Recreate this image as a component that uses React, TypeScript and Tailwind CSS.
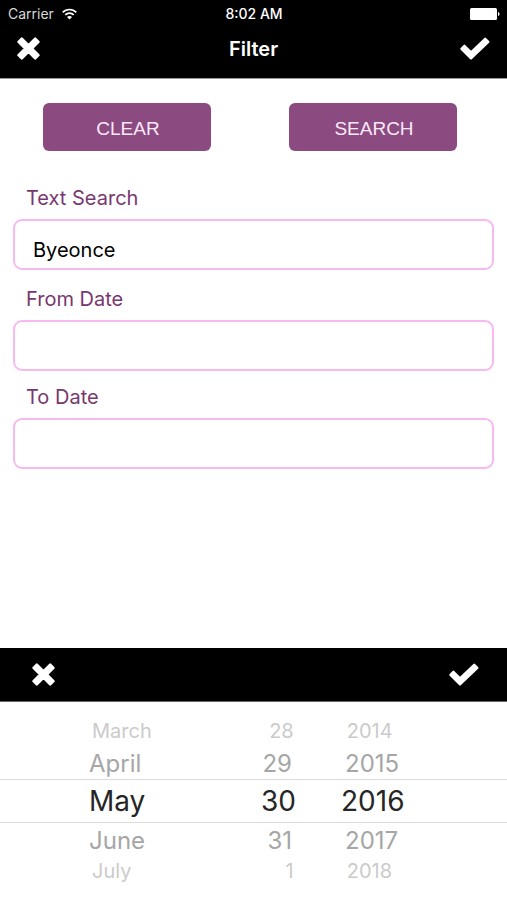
import { useState } from 'react';
import { clsx } from 'clsx';

const CloseIcon = () => (
  <svg width="23" height="23" viewBox="0 0 23 23" aria-hidden="true">
    <path
      d="M4.8 1.6 L11.5 8.3 L18.2 1.6 L21.4 4.8 L14.7 11.5 L21.4 18.2 L18.2 21.4 L11.5 14.7 L4.8 21.4 L1.6 18.2 L8.3 11.5 L1.6 4.8 Z"
      fill="white"
      stroke="white"
      strokeWidth="2.6"
      strokeLinejoin="round"
    />
  </svg>
);

const CheckIcon = () => (
  <svg width="30" height="23" viewBox="0 0 30 23" aria-hidden="true">
    <path
      d="M4.4 8.8 L11 15.4 L25.2 1.8 L28.3 4.9 L11 21.4 L1.5 11.9 Z"
      fill="white"
      stroke="white"
      strokeWidth="2.3"
      strokeLinejoin="round"
    />
  </svg>
);

const WifiIcon = () => (
  <svg width="15" height="12" viewBox="0 0 15 12" aria-hidden="true">
    <g fill="none" stroke="white" strokeWidth="1.6">
      <path d="M0.7 4.4 C4.4 0.6 10.6 0.6 14.3 4.4" />
      <path d="M3.2 6.9 C5.6 4.5 9.4 4.5 11.8 6.9" />
    </g>
    <path d="M7.5 11.4 L5 8.9 C6.4 7.6 8.6 7.6 10 8.9 Z" fill="white" />
  </svg>
);

const BatteryIcon = () => (
  <svg width="30" height="12" viewBox="0 0 30 12" aria-hidden="true">
    <rect x="0" y="0" width="27" height="12" rx="1.5" fill="white" />
    <path d="M28 4 C30 4.6 30 7.4 28 8 Z" fill="white" />
  </svg>
);

interface FieldProps {
  id: string;
  label: string;
  value: string;
  onChange: (value: string) => void;
}

const Field = ({ id, label, value, onChange }: FieldProps) => (
  <div className="flex flex-col">
    <label htmlFor={id} className="px-[13px] text-[20px] leading-6 text-[#78386f]">
      {label}
    </label>
    <input
      id={id}
      type="text"
      value={value}
      onChange={(e) => onChange(e.target.value)}
      className="mt-[9px] h-[51px] w-full rounded-[9px] border-2 border-[#f8b8f0] bg-white px-[18px] pt-2.5 text-[20px] leading-6 text-black outline-none"
    />
  </div>
);

// Rows of the date wheel, nearest to the selection are larger and darker
const wheelRows = [
  { month: 'March', day: '28', year: '2014', distance: 2 },
  { month: 'April', day: '29', year: '2015', distance: 1 },
  { month: 'May', day: '30', year: '2016', distance: 0 },
  { month: 'June', day: '31', year: '2017', distance: 1 },
  { month: 'July', day: '1', year: '2018', distance: 2 },
];

const App = () => {
  const [text, setText] = useState('Byeonce');
  const [fromDate, setFromDate] = useState('');
  const [toDate, setToDate] = useState('');

  const handleClear = () => {
    setText('');
    setFromDate('');
    setToDate('');
  };

  return (
    <div className="flex min-h-screen flex-col bg-white font-['Inter','Liberation_Sans',sans-serif]">
      <header className="border-b border-[#9a9a9a] bg-black text-white">
        {/* Status bar */}
        <div className="grid grid-cols-3 items-center pt-1 pr-[7px] pl-2 text-[14px] leading-5">
          <div className="flex items-center gap-2 text-[#d8d8d8]">
            <span>Carrier</span>
            <WifiIcon />
          </div>
          <span className="text-center font-medium">8:02 AM</span>
          <div className="flex justify-end">
            <BatteryIcon />
          </div>
        </div>

        <div className="flex h-[54px] items-center px-[17px] pb-[5px]">
          <button type="button" aria-label="Close" className="w-[30px]">
            <CloseIcon />
          </button>
          <h1 className="flex-1 text-center text-[20px] leading-6 font-semibold">Filter</h1>
          <button type="button" aria-label="Apply" className="w-[30px]">
            <CheckIcon />
          </button>
        </div>
      </header>

      <main className="flex-1">
        <div className="flex justify-between pt-6 pr-[50px] pl-[43px] font-['Liberation_Sans',sans-serif] text-[19px] text-[#fbe9f8]">
          <button type="button" onClick={handleClear} className="h-12 w-[168px] rounded-md bg-[#8b4a80] pt-1 pl-0.5">
            CLEAR
          </button>
          <button type="button" className="h-12 w-[168px] rounded-md bg-[#8b4a80] pt-1 pl-0.5">
            SEARCH
          </button>
        </div>

        <form className="flex flex-col gap-[17px] px-[13px] pt-[35px]">
          <Field id="text-search" label="Text Search" value={text} onChange={setText} />
          <div className="flex flex-col gap-3.5">
            <Field id="from-date" label="From Date" value={fromDate} onChange={setFromDate} />
            <Field id="to-date" label="To Date" value={toDate} onChange={setToDate} />
          </div>
        </form>
      </main>

      <section aria-label="Date picker">
        <div className="flex h-[54px] items-center justify-between border-b border-[#666666] bg-black pr-7 pl-8">
          <button type="button" aria-label="Cancel date">
            <CloseIcon />
          </button>
          <button type="button" aria-label="Confirm date">
            <CheckIcon />
          </button>
        </div>

        <div className="pt-3.5 pb-3.5">
          {wheelRows.map((row) => (
            <div
              key={row.month}
              className={clsx(
                'grid grid-cols-[126fr_36px_166fr] items-center gap-x-[45px]',
                row.distance === 0 && 'h-11 border-y border-[#dcdcdc] pl-[89px] text-[28px] text-[#262626]',
                row.distance === 1 && 'h-[33px] pl-[89px] text-[24px] text-[#a6a6a6]',
                row.distance === 2 && 'h-[30px] pl-[92px] text-[20px] text-[#cbcbcb]'
              )}
            >
              <button type="button" className="text-left">{row.month}</button>
              <button type="button" className={clsx('text-right', row.distance > 0 && 'pr-1')}>{row.day}</button>
              <button type="button" className={clsx('text-left', row.distance > 0 && 'pl-1')}>{row.year}</button>
            </div>
          ))}
        </div>
      </section>
    </div>
  );
};

export default App;
